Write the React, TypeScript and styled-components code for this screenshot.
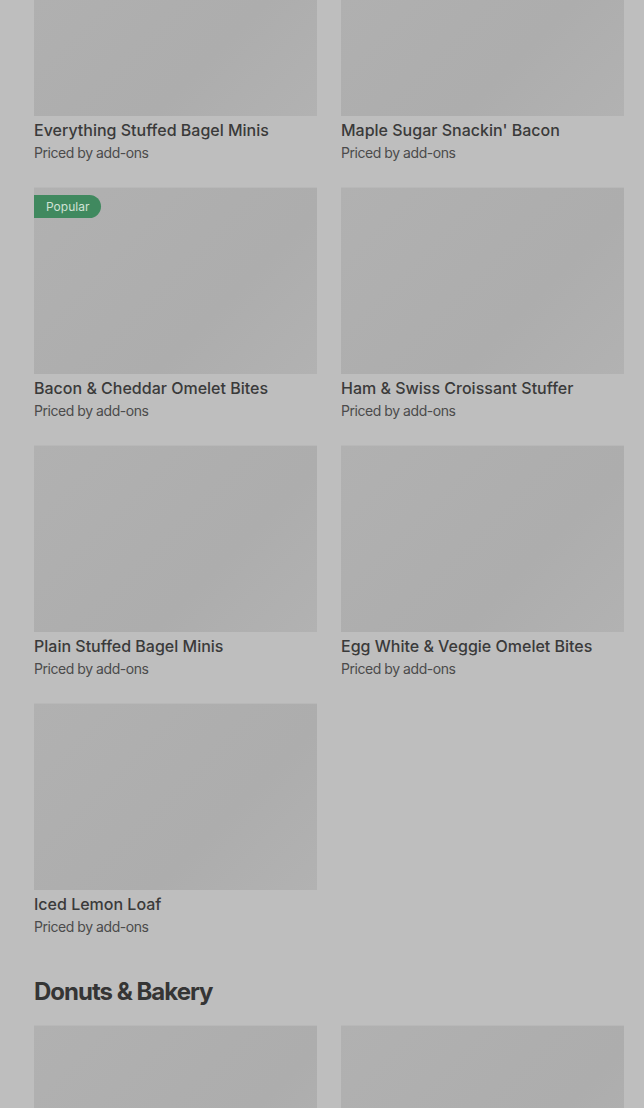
import React from "react";
import styled, { createGlobalStyle } from "styled-components";

type Item = {
  name: string;
  popular?: boolean;
};

const breakfast: Item[] = [
  { name: "Everything Stuffed Bagel Minis" },
  { name: "Maple Sugar Snackin' Bacon" },
  { name: "Bacon & Cheddar Omelet Bites", popular: true },
  { name: "Ham & Swiss Croissant Stuffer" },
  { name: "Plain Stuffed Bagel Minis" },
  { name: "Egg White & Veggie Omelet Bites" },
  { name: "Iced Lemon Loaf" },
];

const bakery: Item[] = [{ name: "Glazed Donut" }, { name: "Blueberry Muffin" }];

const GlobalStyle = createGlobalStyle`
  html, body {
    margin: 0;
    padding: 0;
    background: #bebebe;
    overflow: hidden;
  }
  body {
    font-family: Inter, "Noto Sans", sans-serif;
    color: #393939;
  }
`;

const Page = styled.main`
  padding: 0 20px 0 34px;
  margin-top: -71px;
`;

const Grid = styled.ul`
  list-style: none;
  margin: 0;
  padding: 0;
  display: grid;
  grid-template-columns: 283px 283px;
  column-gap: 24px;
  row-gap: 24px;
`;

const Card = styled.li`
  display: flex;
  flex-direction: column;
  height: 234px;
`;

const Thumb = styled.div`
  position: relative;
  height: 187px;
  background: linear-gradient(
    135deg,
    #b1b1b1 0%,
    #aeaeae 45%,
    #adadad 65%,
    #b2b2b2 100%
  );
  box-shadow: inset 0 1px 0 #b8b8b8;
`;

const Badge = styled.span`
  position: absolute;
  top: 8px;
  left: 0;
  height: 23px;
  line-height: 23px;
  padding: 0 12px;
  border-radius: 0 12px 12px 0;
  background: #40895f;
  color: #d0e2d6;
  font-size: 12px;
`;

const Title = styled.div`
  margin-top: 4px;
  font-size: 16px;
  line-height: 20px;
  font-weight: 500;
  color: #3a3a3a;
  white-space: nowrap;
`;

const Sub = styled.div`
  margin-top: 3px;
  font-size: 14px;
  line-height: 20px;
  color: #4b4b4b;
  letter-spacing: -0.45px;
`;

const SectionTitle = styled.h2`
  margin: 39px 0 17px;
  font-size: 24px;
  line-height: 32px;
  font-weight: 700;
  letter-spacing: -1px;
  color: #353535;
`;

const MenuCard = ({ name, popular }: Item) => (
  <Card>
    <Thumb>{popular && <Badge>Popular</Badge>}</Thumb>
    <Title>{name}</Title>
    <Sub>Priced by add-ons</Sub>
  </Card>
);

export default function App() {
  return (
    <>
      <GlobalStyle />
      <Page>
        <Grid>
          {breakfast.map((it) => (
            <MenuCard key={it.name} {...it} />
          ))}
        </Grid>
        <SectionTitle>Donuts &amp; Bakery</SectionTitle>
        <Grid>
          {bakery.map((it) => (
            <MenuCard key={it.name} {...it} />
          ))}
        </Grid>
      </Page>
    </>
  );
}
